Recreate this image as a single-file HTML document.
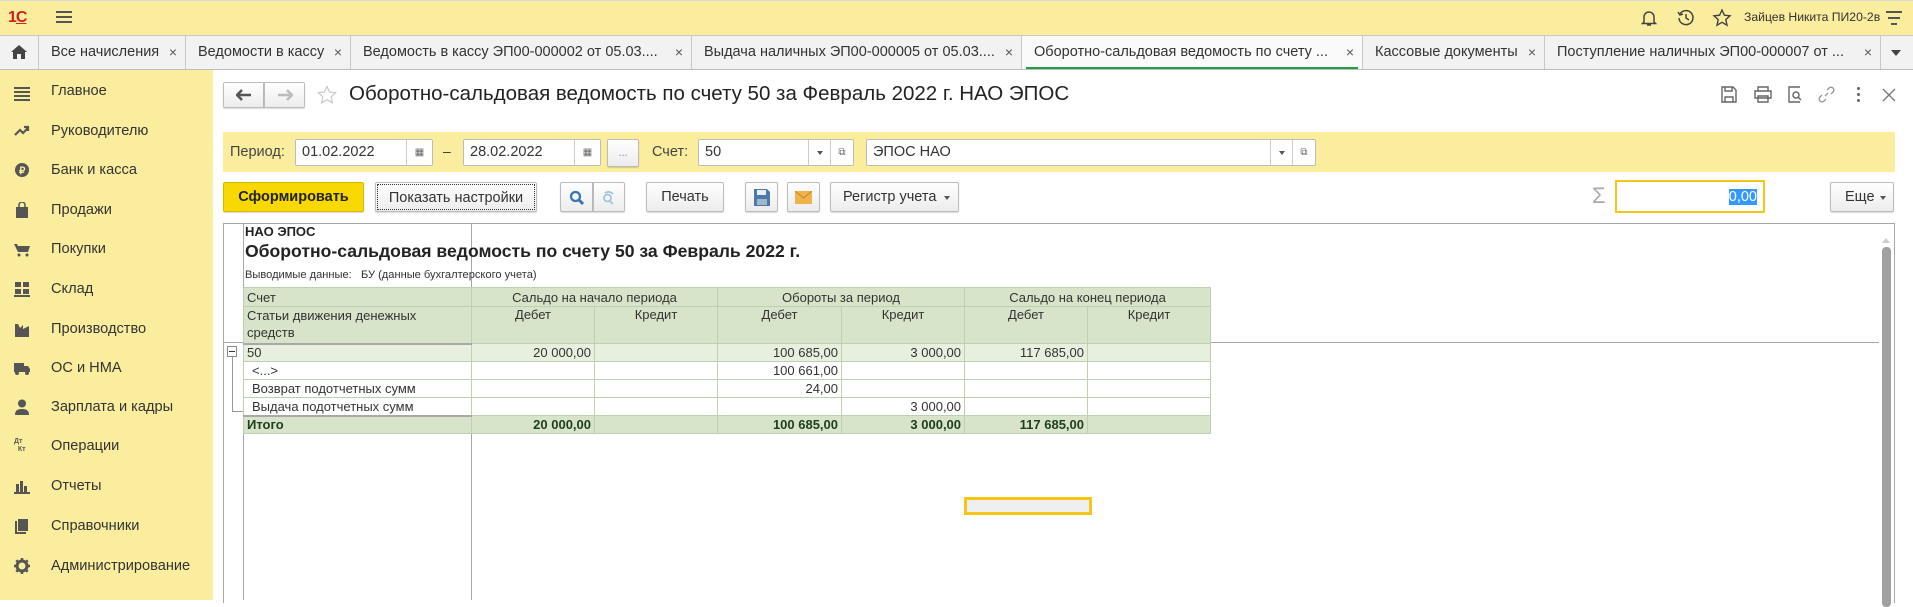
<!DOCTYPE html>
<html><head><meta charset="utf-8">
<style>
*{box-sizing:border-box;margin:0;padding:0}
body{width:1913px;height:600px;overflow:hidden;background:#fff;font-family:"Liberation Sans",Arial,sans-serif;color:#333;position:relative}
.a{position:absolute}
.top{left:0;top:0;width:1913px;height:35px;background:#fbed9e;border-top:1px solid #d9d9d9}
.tabs{left:0;top:35px;width:1913px;height:35px;background:#f2f2f2;border-top:1px solid #c8c8c8;border-bottom:1px solid #bdbdbd}
.tab{position:absolute;top:0;height:33px;border-right:1px solid #c8c8c8;font-size:14.5px;line-height:33px;padding-left:12px;white-space:nowrap;color:#333}
.tab .x{position:absolute;right:8px;top:0;color:#555;font-size:14px}
.side{left:0;top:70px;width:213px;height:530px;background:#fbed9e}
.si{position:absolute;left:51px;font-size:14.6px;color:#333;line-height:16px}
.ic{position:absolute;left:14px;width:16px;height:16px}
.btn{position:absolute;border:1px solid #bcbcbc;border-radius:2px;background:linear-gradient(#fff,#ececec);font-size:14.5px;color:#333;text-align:center;box-shadow:0 1px 1px rgba(0,0,0,.15)}
.fld{position:absolute;background:#fff;border:1px solid #bcbcbc;border-radius:2px;font-size:14.5px;color:#333;padding-left:6px}
table{border-collapse:collapse;font-size:13px;color:#333}
td{border:1px solid #bfd0b0;height:18px;padding:0 3px;white-space:nowrap;overflow:hidden}
</style></head><body>
<div class="a top"></div>
<div class="a" style="left:8px;top:9px;font:bold 16px 'Liberation Sans';color:#d0201c;letter-spacing:-1px">1<span style="text-decoration:underline">C</span></div>
<div class="a" style="left:56px;top:11px;width:16px;height:12px;border-top:2px solid #555;border-bottom:2px solid #555"><div style="margin-top:3px;border-top:2px solid #555"></div></div>
<svg class="a" style="left:1639px;top:8px" width="20" height="20" viewBox="0 0 20 20" fill="none" stroke="#444" stroke-width="1.5"><path d="M5 14V9a5 5 0 0 1 10 0v5l1.5 1.5h-13z M8 17h4"/></svg>
<svg class="a" style="left:1676px;top:8px" width="20" height="20" viewBox="0 0 20 20" fill="none" stroke="#444" stroke-width="1.5"><path d="M4 6a7 7 0 1 1-1 4 M2 4l2 3 3-1 M10 6v4l3 2"/></svg>
<svg class="a" style="left:1712px;top:8px" width="20" height="20" viewBox="0 0 20 20" fill="none" stroke="#444" stroke-width="1.4"><path d="M10 2l2.4 5.2 5.6.6-4.2 3.8 1.2 5.6-5-2.9-5 2.9 1.2-5.6L2 7.8l5.6-.6z"/></svg>
<div class="a" style="left:1744px;top:10px;font-size:12.2px;color:#333">Зайцев Никита ПИ20-2в</div>
<div class="a" style="left:1886px;top:11px;width:16px;border-top:2px solid #555"></div>
<div class="a" style="left:1888px;top:17px;width:12px;border-top:2px solid #555"></div>
<div class="a" style="left:1891px;top:23px;width:6px;border-top:2px solid #555"></div>

<div class="a tabs">
 <div class="tab" style="left:0;width:39px;padding:0"><svg style="position:absolute;left:11px;top:9px" width="16" height="14" viewBox="0 0 16 14"><path d="M8 0L0 7h2v7h4V9h4v5h4V7h2z" fill="#444"/></svg></div>
 <div class="tab" style="left:39px;width:147px">Все начисления<span class="x">×</span></div>
 <div class="tab" style="left:186px;width:165px">Ведомости в кассу<span class="x">×</span></div>
 <div class="tab" style="left:351px;width:341px">Ведомость в кассу ЭП00-000002 от 05.03....<span class="x">×</span></div>
 <div class="tab" style="left:692px;width:330px">Выдача наличных ЭП00-000005 от 05.03....<span class="x">×</span></div>
 <div class="tab" style="left:1022px;width:341px;background:#fafafa">Оборотно-сальдовая ведомость по счету ...<span class="x">×</span><div style="position:absolute;left:4px;right:4px;bottom:0;height:2px;background:#1e9e4a"></div></div>
 <div class="tab" style="left:1363px;width:182px">Кассовые документы<span class="x">×</span></div>
 <div class="tab" style="left:1545px;width:336px">Поступление наличных ЭП00-000007 от ...<span class="x">×</span></div>
 <div class="a" style="left:1891px;top:14px;border:5px solid transparent;border-top:6px solid #444"></div>
</div>

<div class="a side">
 <div class="ic" style="top:15px"><div style="border-top:2px solid #555;margin-top:2px"></div><div style="border-top:2px solid #555;margin-top:2px"></div><div style="border-top:2px solid #555;margin-top:2px"></div><div style="border-top:2px solid #555;margin-top:2px"></div></div>
 <div class="si" style="top:13px">Главное</div>
 <svg class="ic" style="top:53px" viewBox="0 0 16 16"><path d="M1 12l5-5 3 3 5-5M10 4h4v4" stroke="#555" stroke-width="2.2" fill="none"/></svg>
 <div class="si" style="top:53px">Руководителю</div>
 <svg class="ic" style="top:92px" viewBox="0 0 16 16"><circle cx="8" cy="8" r="7" fill="#555"/><text x="5" y="12" font-size="10" fill="#fbed9e" font-family="Liberation Sans" font-weight="bold">₽</text></svg>
 <div class="si" style="top:92px">Банк и касса</div>
 <svg class="ic" style="top:132px" viewBox="0 0 16 16"><path d="M2 5h12v11H2z" fill="#555"/><path d="M5 6V3a3 3 0 0 1 6 0v3" stroke="#555" stroke-width="1.5" fill="none"/></svg>
 <div class="si" style="top:132px">Продажи</div>
 <svg class="ic" style="top:171px" viewBox="0 0 16 16"><path d="M0 3h3l1 2h12l-2 6H4z" fill="#555"/><circle cx="5" cy="14" r="1.5" fill="#555"/><circle cx="13" cy="14" r="1.5" fill="#555"/></svg>
 <div class="si" style="top:171px">Покупки</div>
 <svg class="ic" style="top:211px" viewBox="0 0 16 16"><path d="M1 1h6v5H1zM9 1h6v5H9zM1 8h6v5H1zM9 8h6v5H9zM0 14h16v2H0z" fill="#555"/></svg>
 <div class="si" style="top:211px">Склад</div>
 <svg class="ic" style="top:251px" viewBox="0 0 16 16"><path d="M1 16V3h3l2 4 3-3v4l6-3v11z" fill="#555"/></svg>
 <div class="si" style="top:251px">Производство</div>
 <svg class="ic" style="top:290px" viewBox="0 0 16 16"><path d="M0 3h10v9H0zM10 6h4l2 3v3h-6z" fill="#555"/><circle cx="3" cy="13" r="2" fill="#555"/><circle cx="13" cy="13" r="2" fill="#555"/></svg>
 <div class="si" style="top:290px">ОС и НМА</div>
 <svg class="ic" style="top:329px" viewBox="0 0 16 16"><circle cx="8" cy="4.5" r="4" fill="#555"/><path d="M1 16c0-5 3-6 7-6s7 1 7 6z" fill="#555"/></svg>
 <div class="si" style="top:329px">Зарплата и кадры</div>
 <div class="ic" style="top:368px;font:bold 7px 'Liberation Sans';color:#555;line-height:8px">Дт<br>&nbsp;&nbsp;Кт</div>
 <div class="si" style="top:368px">Операции</div>
 <svg class="ic" style="top:408px" viewBox="0 0 16 16"><path d="M2 6h3v8H2zM6 3h3v11H6zM10 8h3v6h-3zM0 14h16v2H0z" fill="#555"/></svg>
 <div class="si" style="top:408px">Отчеты</div>
 <svg class="ic" style="top:448px" viewBox="0 0 16 16"><path d="M4 1h10v12H4z" fill="#555"/><path d="M2 3v12h10" stroke="#555" stroke-width="2" fill="none"/></svg>
 <div class="si" style="top:448px">Справочники</div>
 <svg class="ic" style="top:488px" viewBox="0 0 16 16"><circle cx="8" cy="8" r="5" fill="none" stroke="#555" stroke-width="3"/><path d="M8 0v3M8 13v3M0 8h3M13 8h3M2.3 2.3l2 2M11.7 11.7l2 2M2.3 13.7l2-2M11.7 4.3l2-2" stroke="#555" stroke-width="2.5"/></svg>
 <div class="si" style="top:488px">Администрирование</div>
</div>

<div class="btn" style="left:223px;top:82px;width:41px;height:26px;border-radius:2px 0 0 2px"><svg width="16" height="12" style="margin-top:6px" viewBox="0 0 16 12"><path d="M1 6h14M6 1L1 6l5 5" stroke="#555" stroke-width="2.5" fill="none"/></svg></div>
<div class="btn" style="left:264px;top:82px;width:41px;height:26px;border-radius:0 2px 2px 0"><svg width="16" height="12" style="margin-top:6px" viewBox="0 0 16 12"><path d="M1 6h14M10 1l5 5-5 5" stroke="#bbb" stroke-width="2.5" fill="none"/></svg></div>
<svg class="a" style="left:317px;top:85px" width="20" height="20" viewBox="0 0 20 20" fill="none" stroke="#c8c8c8" stroke-width="1.2"><path d="M10 1.5l2.6 5.5 6 .7-4.5 4.1 1.3 6-5.4-3.1-5.4 3.1 1.3-6L1.4 7.7l6-.7z"/></svg>
<div class="a" style="left:349px;top:82px;font-size:20.5px;color:#222">Оборотно-сальдовая ведомость по счету 50 за Февраль 2022 г. НАО ЭПОС</div>
<svg class="a" style="left:1721px;top:86px" width="16" height="17" viewBox="0 0 16 17" fill="none" stroke="#666" stroke-width="1.4"><path d="M1 1h11l3 3v12H1z M4 1v4h7V1 M4 16v-5h8v5"/></svg>
<svg class="a" style="left:1754px;top:86px" width="18" height="17" viewBox="0 0 18 17" fill="none" stroke="#666" stroke-width="1.4"><path d="M4 5V1h10v4 M1 5h16v7H1z M4 10h10v6H4z"/></svg>
<svg class="a" style="left:1788px;top:86px" width="16" height="17" viewBox="0 0 16 17" fill="none" stroke="#666" stroke-width="1.4"><path d="M12 16H1V1h11 M5 9a3 3 0 1 0 6 0a3 3 0 1 0-6 0 M10 11l3 3"/></svg>
<svg class="a" style="left:1818px;top:86px" width="17" height="17" viewBox="0 0 17 17" fill="none" stroke="#999" stroke-width="1.4"><path d="M7 10l3-3 M9 4l2-2a2.5 2.5 0 0 1 4 4l-2 2 M8 13l-2 2a2.5 2.5 0 0 1-4-4l2-2"/></svg>
<div class="a" style="left:1857px;top:87px;width:3px;height:3px;background:#666;border-radius:50%;box-shadow:0 6px 0 #666,0 12px 0 #666"></div>
<svg class="a" style="left:1882px;top:88px" width="14" height="14" viewBox="0 0 14 14"><path d="M1 1l12 12M13 1L1 13" stroke="#777" stroke-width="1.4"/></svg>

<div class="a" style="left:223px;top:132px;width:1672px;height:40px;background:#fbed9e"></div>
<div class="a" style="left:230px;top:144px;font-size:14.5px;color:#444">Период:</div>
<div class="fld" style="left:295px;top:139px;width:138px;height:27px;line-height:25px">01.02.2022<div style="position:absolute;right:0;top:0;width:26px;height:25px;border-left:1px solid #ccc;text-align:center;font-size:10px;color:#666">▦</div></div>
<div class="a" style="left:443px;top:143px;font-size:14px">–</div>
<div class="fld" style="left:463px;top:139px;width:138px;height:27px;line-height:25px">28.02.2022<div style="position:absolute;right:0;top:0;width:26px;height:25px;border-left:1px solid #ccc;text-align:center;font-size:10px;color:#666">▦</div></div>
<div class="btn" style="left:607px;top:139px;width:32px;height:28px;line-height:26px;font-size:11px;color:#888">...</div>
<div class="a" style="left:652px;top:144px;font-size:14.5px;color:#444">Счет:</div>
<div class="fld" style="left:698px;top:139px;width:156px;height:27px;line-height:25px">50<div style="position:absolute;right:22px;top:0;width:23px;height:25px;border-left:1px solid #ccc;border-right:1px solid #ccc"><div style="margin:11px auto;width:0;border:3px solid transparent;border-top:4px solid #555"></div></div><div style="position:absolute;right:0;top:0;width:22px;height:25px;font-size:10px;color:#666;text-align:center">⧉</div></div>
<div class="fld" style="left:866px;top:139px;width:450px;height:27px;line-height:25px">ЭПОС НАО<div style="position:absolute;right:22px;top:0;width:23px;height:25px;border-left:1px solid #ccc;border-right:1px solid #ccc"><div style="margin:11px auto;width:0;border:3px solid transparent;border-top:4px solid #555"></div></div><div style="position:absolute;right:0;top:0;width:22px;height:25px;font-size:10px;color:#666;text-align:center">⧉</div></div>

<div class="btn" style="left:223px;top:182px;width:141px;height:30px;line-height:28px;background:#f7d800;border-color:#d6b800;font-weight:bold;color:#222">Сформировать</div>
<div class="btn" style="left:375px;top:182px;width:162px;height:30px;line-height:26px;padding:1px;"><div style="border:1px dotted #333;height:26px">Показать настройки</div></div>
<div class="btn" style="left:560px;top:182px;width:33px;height:30px;border-radius:2px 0 0 2px"><svg width="16" height="16" style="margin-top:7px" viewBox="0 0 16 16"><circle cx="6.5" cy="6.5" r="4.5" fill="none" stroke="#3875b8" stroke-width="2.2"/><path d="M10 10l4 4" stroke="#3875b8" stroke-width="3"/></svg></div>
<div class="btn" style="left:593px;top:182px;width:32px;height:30px;border-radius:0 2px 2px 0"><svg width="16" height="16" style="margin-top:7px" viewBox="0 0 16 16"><circle cx="6.5" cy="8" r="3.5" fill="none" stroke="#9fc4dd" stroke-width="1.8"/><path d="M9 11l3 3M4 3a6 6 0 0 1 8 1" stroke="#9fc4dd" stroke-width="1.8" fill="none"/></svg></div>
<div class="btn" style="left:646px;top:182px;width:78px;height:30px;line-height:28px">Печать</div>
<div class="btn" style="left:745px;top:182px;width:33px;height:30px"><svg width="16" height="17" style="margin-top:6px" viewBox="0 0 16 17"><path d="M0 0h13l3 3v14H0z" fill="#4d79a8"/><path d="M3 1h9v5H3z" fill="#e8eef5"/><path d="M3 10h10v6H3z" fill="#9fb8d2"/></svg></div>
<div class="btn" style="left:787px;top:182px;width:33px;height:30px"><svg width="17" height="13" style="margin-top:8px" viewBox="0 0 17 13"><path d="M0 0h17v13H0z" fill="#f0b24b"/><path d="M0 0l8.5 7L17 0" stroke="#c78420" fill="none"/></svg></div>
<div class="btn" style="left:830px;top:182px;width:129px;height:30px;line-height:28px;text-align:left;padding-left:12px">Регистр учета<span style="position:absolute;right:8px;top:13px;border:3px solid transparent;border-top:4px solid #555"></span></div>
<div class="a" style="left:1592px;top:183px;font-size:22px;color:#aaa">Σ</div>
<div class="a" style="left:1615px;top:180px;width:150px;height:33px;border:2px solid #f5c518;background:#fff"><span style="position:absolute;right:6px;top:7px;font-size:14.5px;background:#3399ff;color:#fff;line-height:16px">0,00</span></div>
<div class="btn" style="left:1830px;top:182px;width:64px;height:30px;line-height:28px;text-align:left;padding-left:14px">Еще<span style="position:absolute;right:7px;top:13px;border:3px solid transparent;border-top:4px solid #555"></span></div>

<div class="a" style="left:223px;top:223px;width:1672px;height:380px;border:1px solid #a8a8a8;border-bottom:none"></div>
<div class="a" style="left:243px;top:224px;width:1px;height:376px;background:#a8a8a8"></div>
<div class="a" style="left:471px;top:224px;width:1px;height:376px;background:#a8a8a8"></div>
<div class="a" style="left:224px;top:342px;width:1655px;height:1px;background:#a8a8a8"></div>
<div class="a" style="left:1882px;top:247px;width:9px;height:360px;background:#a0a0a0;border-radius:4px"></div>
<div class="a" style="left:1882px;top:234px;border:4px solid transparent;border-bottom:5px solid #ccc"></div>

<div class="a" style="left:245px;top:224px;font-size:13px;font-weight:bold;color:#222">НАО ЭПОС</div>
<div class="a" style="left:245px;top:241px;font-size:17.6px;font-weight:bold;color:#222">Оборотно-сальдовая ведомость по счету 50 за Февраль 2022 г.</div>
<div class="a" style="left:245px;top:269px;font-size:11.1px;color:#333">Выводимые данные:&nbsp;&nbsp; БУ (данные бухгалтерского учета)</div>

<table class="a" style="left:243px;top:287px;width:967px;table-layout:fixed">
<colgroup><col style="width:228px"><col style="width:123px"><col style="width:123px"><col style="width:124px"><col style="width:123px"><col style="width:123px"><col style="width:123px"></colgroup>
<tr style="background:#d7e4c9;height:19px"><td>Счет</td><td colspan="2" style="text-align:center">Сальдо на начало периода</td><td colspan="2" style="text-align:center">Обороты за период</td><td colspan="2" style="text-align:center">Сальдо на конец периода</td></tr>
<tr style="background:#d7e4c9;height:37px;vertical-align:top"><td style="line-height:17px">Статьи движения денежных<br>средств</td><td style="text-align:center">Дебет</td><td style="text-align:center">Кредит</td><td style="text-align:center">Дебет</td><td style="text-align:center">Кредит</td><td style="text-align:center">Дебет</td><td style="text-align:center">Кредит</td></tr>
<tr style="background:#e7f0de"><td style="border-top:2px solid #a8a8a8">50</td><td style="text-align:right">20 000,00</td><td></td><td style="text-align:right">100 685,00</td><td style="text-align:right">3 000,00</td><td style="text-align:right">117 685,00</td><td></td></tr>
<tr><td style="padding-left:8px">&lt;...&gt;</td><td></td><td></td><td style="text-align:right">100 661,00</td><td></td><td></td><td></td></tr>
<tr><td style="padding-left:8px">Возврат подотчетных сумм</td><td></td><td></td><td style="text-align:right">24,00</td><td></td><td></td><td></td></tr>
<tr><td style="padding-left:8px">Выдача подотчетных сумм</td><td></td><td></td><td></td><td style="text-align:right">3 000,00</td><td></td><td></td></tr>
<tr style="background:#d7e4c9;font-weight:bold;color:#1f3d1f"><td style="border-top:2px solid #a8a8a8">Итого</td><td style="text-align:right">20 000,00</td><td></td><td style="text-align:right">100 685,00</td><td style="text-align:right">3 000,00</td><td style="text-align:right">117 685,00</td><td></td></tr>
</table>
<div class="a" style="left:227px;top:346px;width:10px;height:11px;border:1px solid #888;background:#fff"><div style="margin:4px 1px;border-top:1px solid #333"></div></div>
<div class="a" style="left:232px;top:357px;width:11px;height:55px;border-left:1px solid #999;border-bottom:1px solid #999"></div>
<div class="a" style="left:964px;top:497px;width:128px;height:18px;border:3px solid #f5c518;background:#efefef"></div>
</body></html>
